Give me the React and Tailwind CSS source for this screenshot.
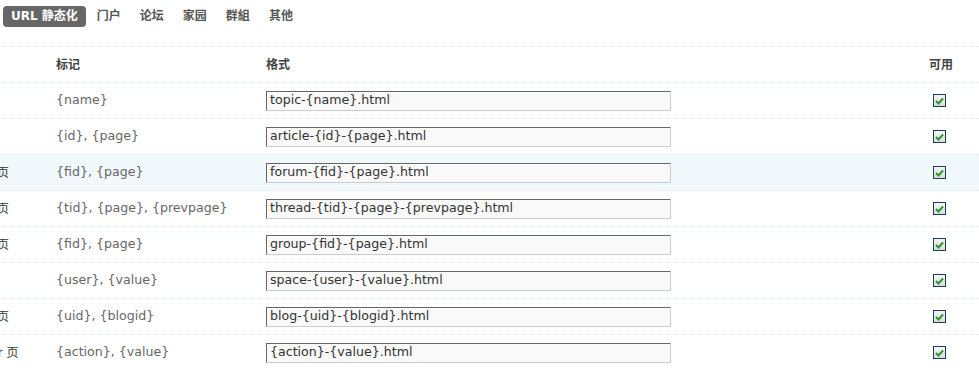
const tabs = ['门户', '论坛', '家园', '群組', '其他']

const rows = [
  { page: '专题页', vars: '{name}', format: 'topic-{name}.html' },
  { page: '文章页', vars: '{id}, {page}', format: 'article-{id}-{page}.html' },
  { page: '版块主题列表页', vars: '{fid}, {page}', format: 'forum-{fid}-{page}.html', hover: true },
  { page: '论坛主题内容页', vars: '{tid}, {page}, {prevpage}', format: 'thread-{tid}-{page}-{prevpage}.html' },
  { page: '群组主题列表页', vars: '{fid}, {page}', format: 'group-{fid}-{page}.html' },
  { page: '用户空间页', vars: '{user}, {value}', format: 'space-{user}-{value}.html' },
  { page: '个人日志查看页', vars: '{uid}, {blogid}', format: 'blog-{uid}-{blogid}.html' },
  { page: '论坛 Archiver 页', vars: '{action}, {value}', format: '{action}-{value}.html' },
]

function Check() {
  return (
    <span className="inline-flex w-[13px] h-[13px] border border-[#1e3f55] bg-gradient-to-b from-[#f4f4f4] to-[#d9dde0] items-center justify-center">
      <svg width="9" height="8" viewBox="0 0 9 8">
        <path d="M1 4 L3.5 6.5 L8 1.5" fill="none" stroke="#2a9a2a" strokeWidth="2" />
      </svg>
    </span>
  )
}

export default function App() {
  return (
    <div className="w-[979px] h-[376px] overflow-hidden bg-white text-[12px] font-['DejaVu_Sans','Noto_Sans_CJK_SC',sans-serif]">
      <div className="flex items-center h-[31px] pl-[3px] pt-px">
        <span className="h-[21px] px-[8px] rounded-[4px] bg-[#666] text-white font-bold flex items-center">URL 静态化</span>
        <div className="flex gap-[19px] ml-[11px] text-[#555] font-bold">
          {tabs.map((t) => (
            <span key={t}>{t}</span>
          ))}
        </div>
      </div>

      <div className="mt-[15px] -ml-[75px]">
        <div className="grid grid-cols-[131px_210px_663px_60px] h-[36px] items-center border-t border-dotted border-[#dbe8ef] font-bold text-[#444]">
          <span></span>
          <span>标记</span>
          <span>格式</span>
          <span>可用</span>
        </div>
        {rows.map((r) => (
          <div
            key={r.format}
            className={`grid grid-cols-[131px_210px_663px_60px] h-[36px] items-center border-t border-dotted border-[#dbe8ef] ${r.hover ? 'bg-[#f2f9fd]' : ''}`}
          >
            <span className="text-[#333] whitespace-nowrap">{r.page}</span>
            <span className="text-[#666] text-[12.6px]">{r.vars}</span>
            <span>
              <span className="flex items-center w-[405px] h-[20px] px-[3px] bg-[#f9f9f9] border border-t-[#666] border-l-[#666] border-r-[#ccc] border-b-[#ccc] text-[#333] text-[12.6px]">
                {r.format}
              </span>
            </span>
            <span className="pl-[4px] flex">
              <Check />
            </span>
          </div>
        ))}
      </div>
    </div>
  )
}
